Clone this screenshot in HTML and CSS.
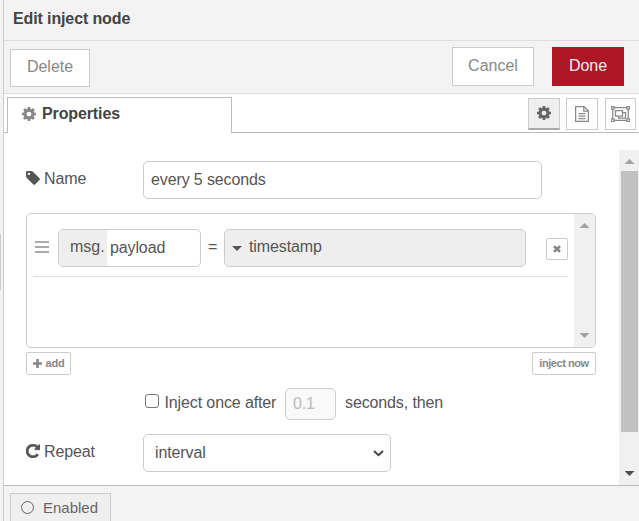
FILE: index.html
```html
<!DOCTYPE html>
<html lang="en">
<head>
<meta charset="utf-8">
<title>Edit inject node</title>
<link rel="stylesheet" href="styles.css">
</head>
<body>
<svg class="defs" width="0" height="0">
  <symbol id="cog" viewBox="128 128 1536 1536"><path d="M1152 896q0-106-75-181t-181-75-181 75-75 181 75 181 181 75 181-75 75-181zm512-109v222q0 12-8 23t-20 13l-185 28q-19 54-39 91 35 50 107 138 10 12 10 25t-9 23q-27 37-99 108t-94 71q-12 0-26-9l-138-108q-44 23-91 38-16 136-29 186-7 28-36 28h-222q-14 0-24.5-8.5t-11.5-21.5l-28-184q-49-16-90-37l-141 107q-10 9-25 9-14 0-25-11-126-114-165-168-7-10-7-23 0-12 8-23 15-21 51-66.5t54-70.5q-27-50-41-99l-183-27q-13-2-21-12.5t-8-23.5v-222q0-12 8-23t19-13l186-28q14-46 39-92-40-57-107-138-10-12-10-24 0-10 9-23 26-36 98.5-107.5t94.5-71.5q13 0 26 10l138 107q44-23 91-38 16-136 29-186 7-28 36-28h222q14 0 24.5 8.5t11.5 21.5l28 184q49 16 90 37l142-107q9-9 24-9 13 0 25 10 129 119 165 170 7 8 7 22 0 12-8 23-15 21-51 66.5t-54 70.5q26 50 41 98l183 28q13 2 21 12.5t8 23.5z"/></symbol>
</svg>
<div class="app">
  <div class="gutter"><div class="grip"></div></div>
  <main class="tray">
    <header class="title">Edit inject node</header>
    <div class="toolbar">
      <button class="btn delete">Delete</button>
      <button class="btn cancel">Cancel</button>
      <button class="btn done">Done</button>
    </div>
    <nav class="tabs">
      <div class="tab"><svg class="tab-icon"><use href="#cog"/></svg><span>Properties</span></div>
      <div class="tab-rest">
        <button class="icon-btn active"><svg width="14" height="14"><use href="#cog"/></svg></button>
        <button class="icon-btn"><svg class="line" width="14" height="16" viewBox="0 0 14 16"><path d="M.6.6H9L13.4 5v10.4H.6zM8.8.6V5.200h4.600M3.500 7.500h7M3.500 10h7M3.500 12.500h7"/></svg></button>
        <button class="icon-btn last"><svg class="line" width="19" height="16" viewBox="0 0 19 16"><path d="M2.500 1.700h14M2.500 14.300h14M1.800 2.500v11M17.200 2.500v11"/><path d="M4.500 4.500h7v5.500h-7zM11.600 6.500h2.900v5.500h-7V10"/><path class="node" d="M.5.500h2.600v2.600H.5zM15.900.5h2.600v2.600h-2.600zM.5 12.900h2.600v2.600H.5zM15.900 12.900h2.600v2.600h-2.600z"/></svg></button>
      </div>
    </nav>
    <div class="body">
      <form class="form">
        <div class="row name-row">
          <label class="label"><svg class="tag" width="14" height="14" viewBox="128 128 1530 1530"><path d="M576 448q0-53-37.500-90.500t-90.500-37.500-90.500 37.500-37.500 90.500 37.500 90.500 90.500 37.500 90.500-37.500 37.500-90.500zm1067 576q0 53-37 90l-491 492q-39 37-91 37-53 0-90-37l-715-716q-38-37-64.500-101t-26.500-117v-416q0-52 38-90t90-38h416q53 0 117 26.500t102 64.500l715 714q37 39 37 91z"/></svg><span>Name</span></label>
          <div class="field name-field">every 5 seconds</div>
        </div>
        <div class="list">
          <div class="items">
            <div class="item">
              <div class="handle"><i></i><i></i><i></i></div>
              <div class="field prop"><span class="prefix">msg.</span><span class="value">payload</span></div>
              <span class="equals">=</span>
              <div class="field typed"><i class="caret"></i><span>timestamp</span></div>
              <button type="button" class="small remove"><svg width="8" height="8" viewBox="0 0 8 8"><path d="M1 1.200l6 5.600M7 1.200L1 6.800"/></svg></button>
            </div>
          </div>
          <div class="inner-scroll"><i class="arrow up"></i><i class="arrow down"></i></div>
        </div>
        <div class="actions">
          <button type="button" class="small add"><svg width="9" height="9" viewBox="0 0 9 9"><path d="M4.500 0v9M0 4.500h9"/></svg><span>add</span></button>
          <button type="button" class="small inject">inject now</button>
        </div>
        <div class="once">
          <i class="check"></i><span class="once-text">Inject once after</span>
          <div class="field delay">0.1</div><span>seconds, then</span>
        </div>
        <div class="row repeat-row">
          <label class="label"><svg class="redo" width="14" height="14" viewBox="128 128 1536 1536"><path d="M1664 256v448q0 26-19 45t-45 19h-448q-42 0-59-40-17-39 14-69l138-138q-148-137-349-137-104 0-198.500 40.500t-163.500 109.500-109.500 163.500-40.500 198.500 40.500 198.500 109.500 163.500 163.500 109.500 198.500 40.500q119 0 225-52t179-147q7-10 23-12 15 0 25 9l137 138q9 8 9.500 20.500t-7.500 22.500q-109 132-264 204.500t-327 72.500q-156 0-298-61t-245-164-164-245-61-298 61-298 164-245 245-164 298-61q147 0 284.500 55.500t244.500 156.500l130-129q29-31 70-14 39 17 39 59z"/></svg><span>Repeat</span></label>
          <div class="field select"><span>interval</span><svg width="11" height="7" viewBox="0 0 11 7"><path d="M1 1l4.500 4.200L10 1"/></svg></div>
        </div>
      </form>
      <div class="scroll"><i class="arrow up"></i><div class="thumb"></div><i class="arrow down dark"></i></div>
    </div>
    <footer class="footer">
      <button class="enabled"><i class="circle"></i><span>Enabled</span></button>
    </footer>
  </main>
</div>
</body>
</html>
```

FILE: styles.css
```css
* { box-sizing: border-box; }
html, body { margin: 0; height: 100%; overflow: hidden; }
body { font: 16px/20px "Liberation Sans", Arial, sans-serif; letter-spacing: -.12px; color: #555; background: #fff; }
button { font: inherit; letter-spacing: inherit; margin: 0; padding: 0; display: flex; align-items: center; justify-content: center; }
svg { display: block; fill: currentColor; flex: none; }
.defs { position: absolute; }
.app { display: flex; height: 521px; }
.gutter { width: 4px; flex: none; background: #f3f3f3; border-right: 1px solid #ccc; padding-top: 234px; }
.grip { width: 1px; height: 56px; background: #ccc; }
.tray { flex: 1; min-width: 0; display: flex; flex-direction: column; }

.title { height: 41px; padding: 9px 9px 0; background: #f3f3f3; border-bottom: 1px solid #ddd; font-weight: bold; color: #444; }
.toolbar { height: 53px; display: flex; align-items: flex-start; padding: 6px 15px 0 6px; background: #f3f3f3; border-bottom: 1px solid #ddd; }
.btn { height: 39px; border: 1px solid #ccc; background: #fff; color: #888; padding-bottom: 2px; letter-spacing: 0; }
.delete { width: 80px; height: 38px; margin: 2px auto 0 0; }
.cancel { width: 82px; margin-right: 18px; }
.done { width: 72px; background: #ad1625; border-color: #ad1625; color: #eee; }

.tabs { height: 39px; display: flex; padding-top: 3px; }
.tabs::before { content: ""; width: 3px; border-bottom: 1px solid #bbb; }
.tab { width: 225px; border: 1px solid #bbb; border-bottom: 0; display: flex; align-items: center; gap: 6px; padding: 0 0 3px 14px; font-weight: bold; color: #444; }
.tab-icon { width: 14px; height: 14px; margin-top: -1px; color: #888; }
.tab-rest { flex: 1; display: flex; justify-content: flex-end; padding: 1px 3px 0 0; border-bottom: 1px solid #bbb; }
.icon-btn { width: 32px; height: 32px; border: 1px solid #ccc; background: #fff; color: #888; margin-right: 6px; padding-bottom: 1px; }
.icon-btn:nth-child(2) { margin-right: 7px; }
.icon-btn.last { width: 31px; margin-right: 0; }
.icon-btn.active { background: #efefef; border-bottom: 2px solid #aaa; color: #666; }
.line { fill: none; stroke: currentColor; stroke-width: 1.25; }
.node { fill: #fff; }

.body { height: 352px; display: flex; padding-top: 17px; }
.form { width: 570px; margin-left: 22px; padding-top: 11px; }
.field { height: 38px; border: 1px solid #ccc; border-radius: 5px; background: #fff; display: flex; align-items: center; overflow: hidden; }
.row { display: flex; }
.label { width: 117px; height: 35px; display: flex; align-items: center; gap: 4px; }
.tag { margin-top: -1px; }
.redo { margin-top: -1px; stroke: currentColor; stroke-width: 60; }
.name-field { width: 399px; padding-left: 7px; }
.list { height: 135px; margin-top: 14px; border: 1px solid #ccc; border-radius: 5px; overflow: hidden; display: flex; }
.items { flex: 1; padding: 0 6px; }
.item { height: 63px; border-bottom: 1px solid #ddd; padding-top: 15px; display: flex; align-items: flex-start; }
.handle { width: 14px; margin: 12px 9px 0 2px; display: grid; gap: 2.6px; }
.handle i { height: 2.4px; background: #aaa; }
.prop { width: 143px; }
.prefix { align-self: stretch; width: 48px; padding: 7px 0 0 11px; background: #eee; letter-spacing: 0; }
.value { padding-left: 3px; }
.equals { width: 23px; text-align: center; margin-top: 8px; }
.typed { width: 302px; background: #eee; padding: 0 0 3px 7px; gap: 7px; }
.caret { border: 5px solid transparent; border-top-color: #555; border-bottom: 0; margin-top: 3px; }
.small { border: 1px solid #ccc; border-radius: 2px; background: #fff; color: #888; font-size: 11px; font-weight: bold; line-height: 16px; letter-spacing: -.45px; padding-bottom: 1px; }
.small svg { stroke: currentColor; fill: none; stroke-width: 2.6; }
.remove { width: 22px; height: 22px; margin: 9px 0 0 auto; padding: 0; }
.inner-scroll { width: 21px; background: #f0f0f0; display: flex; flex-direction: column; justify-content: space-between; align-items: center; padding: 9px 0 9px; }
.arrow { display: block; width: 10px; height: 5px; background: #a3a3a3; flex: none; }
.up { clip-path: polygon(50% 0, 100% 100%, 0 100%); }
.down { clip-path: polygon(0 0, 100% 0, 50% 100%); }
.actions { margin-top: 4px; display: flex; justify-content: space-between; }
.add { width: 45px; height: 23px; gap: 4px; letter-spacing: -.2px; }
.inject { width: 64px; height: 23px; }
.once { height: 32px; margin: 13px 0 0 118px; display: flex; align-items: center; padding-bottom: 2px; }
.check { width: 14px; height: 14px; border: 1px solid #767676; border-radius: 3px; margin: 0 6px 4px .5px; }
.once-text { width: 120.5px; white-space: nowrap; }
.delay { width: 51px; height: 32px; margin: 2px 9px 0 0; padding-left: 7px; background: #f9f9f9; color: #bbb; }
.repeat-row { margin-top: 14px; }
.select { width: 248px; padding: 0 6px 1px 11px; justify-content: space-between; }
.select svg { fill: none; stroke: #444; stroke-width: 2; margin-top: 1px; }
.scroll { width: 20px; margin-left: auto; background: #f0f0f0; padding: 9px 1px 9px 2px; display: flex; flex-direction: column; align-items: center; }
.thumb { width: 17px; height: 261px; margin-top: 7px; background: #c1c1c1; }
.scroll .dark { background: #505050; margin-top: auto; }

.footer { height: 36px; background: #f3f3f3; border-top: 1px solid #bbb; padding: 7px 6px 0; overflow: hidden; }
.enabled { width: 101px; height: 34px; border: 1px solid #ccc; background: #efefef; color: #666; font-size: 15px; gap: 9px; padding: 0 2px 4px 0; letter-spacing: 0; }
.circle { width: 13px; height: 13px; border: 1px solid #666; border-radius: 50%; margin-top: -1px; }
```
